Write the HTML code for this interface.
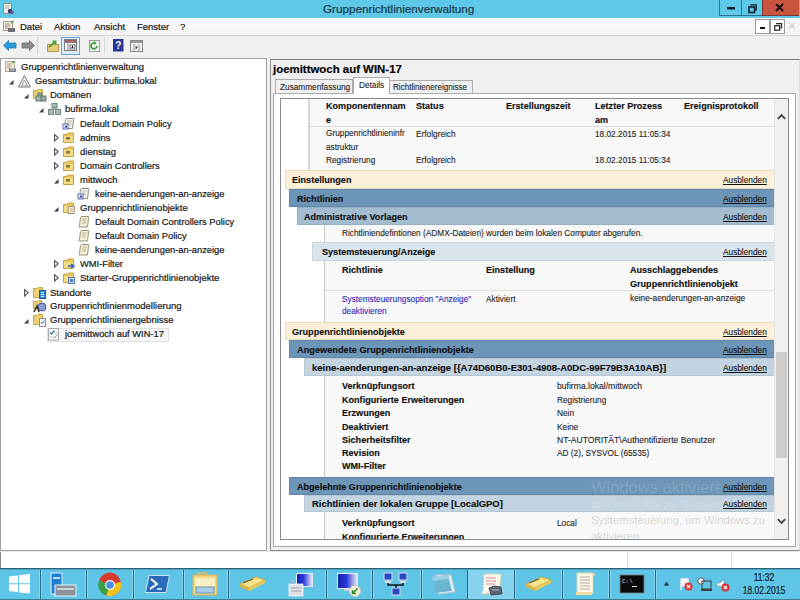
<!DOCTYPE html>
<html><head><meta charset="utf-8"><style>
html,body{margin:0;padding:0}
body{width:800px;height:600px;overflow:hidden;position:relative;font-family:"Liberation Sans",sans-serif;background:#f0f0f0;color:#000}
.a{position:absolute}
.t{position:absolute;white-space:nowrap;font-size:9.5px;line-height:12px;color:#161616;-webkit-text-stroke:0.2px #161616}
.r{position:absolute;white-space:nowrap;font-size:9px;line-height:12px;color:#222;transform:scaleX(0.92);transform-origin:0 0;-webkit-text-stroke:0.1px #222}
.rb{position:absolute;white-space:nowrap;font-size:9.3px;line-height:12px;color:#111;font-weight:bold;transform:scaleX(0.975);transform-origin:0 0;-webkit-text-stroke:0.15px #111}
.lnk{position:absolute;white-space:nowrap;font-size:9px;line-height:12px;color:#111;text-decoration:underline;transform:scaleX(0.92);transform-origin:0 0;-webkit-text-stroke:0.1px #111}
svg{position:absolute;overflow:visible}
</style></head><body>
<div class="a" style="left:0px;top:0px;width:800px;height:18px;background:#5ec8e8"></div>
<div class="t" style="left:323px;top:2px;font-size:11.7px;line-height:14px;color:#1c4658">Gruppenrichtlinienverwaltung</div>
<div class="a" style="left:719px;top:0px;width:22px;height:15px;background:#5ec8e8;border-bottom:1px solid #2f6f86;border-left:1px solid #2f6f86"></div>
<div class="a" style="left:741px;top:0px;width:21px;height:15px;background:#5ec8e8;border-bottom:1px solid #2f6f86;border-left:1px solid #2f6f86"></div>
<div class="a" style="left:762px;top:0px;width:36px;height:15px;background:#c9553f;border-bottom:1px solid #7a3a30;border-left:1px solid #7a3a30"></div>
<div class="a" style="left:0px;top:18px;width:800px;height:17px;background:linear-gradient(#fbfbfb,#f3f3f3);border-bottom:1px solid #d5d5d5"></div>
<div class="t" style="left:20px;top:21px;">Datei</div>
<div class="t" style="left:54px;top:21px;">Aktion</div>
<div class="t" style="left:94px;top:21px;">Ansicht</div>
<div class="t" style="left:137px;top:21px;">Fenster</div>
<div class="t" style="left:180px;top:21px;">?</div>
<div class="a" style="left:755px;top:19px;width:13px;height:13px;background:#fff;border:1px solid #9a9a9a"></div>
<div class="a" style="left:770px;top:19px;width:13px;height:13px;background:#fff;border:1px solid #9a9a9a"></div>
<div class="a" style="left:0px;top:36px;width:800px;height:22px;background:#f0f0f0"></div>
<div class="a" style="left:0px;top:58px;width:267px;height:493px;background:#fff;border:1px solid #a0a0a0;box-sizing:border-box"></div>
<div class="a" style="left:47px;top:328px;width:122px;height:14px;background:#f6f6f6;border:1px solid #e0e0e0;box-sizing:border-box"></div>
<div class="t" style="left:21px;top:61px;">Gruppenrichtlinienverwaltung</div>
<div class="t" style="left:35px;top:75px;transform:scaleX(0.98);transform-origin:0 0">Gesamtstruktur: bufirma.lokal</div>
<div class="t" style="left:50px;top:89px;">Domänen</div>
<div class="t" style="left:65px;top:103px;">bufirma.lokal</div>
<div class="t" style="left:80px;top:117.6px;transform:scaleX(0.98);transform-origin:0 0">Default Domain Policy</div>
<div class="t" style="left:80px;top:131.6px;">admins</div>
<div class="t" style="left:80px;top:145.6px;">dienstag</div>
<div class="t" style="left:80px;top:159.6px;transform:scaleX(0.98);transform-origin:0 0">Domain Controllers</div>
<div class="t" style="left:80px;top:173.6px;">mittwoch</div>
<div class="t" style="left:95px;top:187.6px;transform:scaleX(0.98);transform-origin:0 0">keine-aenderungen-an-anzeige</div>
<div class="t" style="left:80px;top:201.6px;">Gruppenrichtlinienobjekte</div>
<div class="t" style="left:95px;top:215.6px;transform:scaleX(0.98);transform-origin:0 0">Default Domain Controllers Policy</div>
<div class="t" style="left:95px;top:229.6px;transform:scaleX(0.98);transform-origin:0 0">Default Domain Policy</div>
<div class="t" style="left:95px;top:243.6px;transform:scaleX(0.98);transform-origin:0 0">keine-aenderungen-an-anzeige</div>
<div class="t" style="left:80px;top:257.6px;transform:scaleX(0.98);transform-origin:0 0">WMI-Filter</div>
<div class="t" style="left:80px;top:271.6px;">Starter-Gruppenrichtlinienobjekte</div>
<div class="t" style="left:50px;top:286.6px;">Standorte</div>
<div class="t" style="left:50px;top:300px;">Gruppenrichtlinienmodellierung</div>
<div class="t" style="left:50px;top:314px;">Gruppenrichtlinienergebnisse</div>
<div class="t" style="left:65px;top:328px;transform:scaleX(0.98);transform-origin:0 0">joemittwoch auf WIN-17</div>
<div class="a" style="left:270px;top:59px;width:530px;height:492px;border:1px solid #8c8c8c;border-top-color:#7a7a7a;border-right-color:#dedede;box-sizing:border-box;background:#f0f0f0"></div>
<div class="t" style="left:273px;top:62px;font-size:10.8px;line-height:14px;font-weight:bold;color:#000;transform:scaleX(1.058);transform-origin:0 0">joemittwoch auf WIN-17</div>
<div class="a" style="left:273px;top:93px;width:523px;height:454px;border:1px solid #a8a8a8;box-sizing:border-box;background:#fff"></div>
<div class="a" style="left:280px;top:98px;width:509px;height:442px;border:1px solid #8a8a8a;box-sizing:border-box;background:#fff"></div>
<div class="a" style="left:281px;top:99px;width:493px;height:440px;overflow:hidden">
<div class="a" style="left:27px;top:0px;width:466px;height:71px;background:#f8f8f8;border-left:2px solid #d6d6d6"></div>
<div class="a" style="left:28px;top:27px;width:465px;height:1px;background:#dcdcdc"></div>
<div class="rb" style="left:45px;top:1px;">Komponentennam</div>
<div class="rb" style="left:45px;top:15px;">e</div>
<div class="rb" style="left:135px;top:1px;">Status</div>
<div class="rb" style="left:225px;top:1px;">Erstellungszeit</div>
<div class="rb" style="left:314px;top:1px;">Letzter Prozess</div>
<div class="rb" style="left:314px;top:15px;">am</div>
<div class="rb" style="left:403px;top:1px;">Ereignisprotokoll</div>
<div class="r" style="left:45px;top:28px;">Gruppenrichtlinieninfr</div>
<div class="r" style="left:45px;top:42px;">astruktur</div>
<div class="r" style="left:135px;top:29px;">Erfolgreich</div>
<div class="r" style="left:314px;top:29px;">18.02.2015 11:05:34</div>
<div class="r" style="left:45px;top:55px;">Registrierung</div>
<div class="r" style="left:135px;top:55px;">Erfolgreich</div>
<div class="r" style="left:314px;top:55px;">18.02.2015 11:05:34</div>
<div class="a" style="left:43px;top:125px;width:450px;height:98px;background:#f8f8f8;border-left:1px solid #c8c8c8"></div>
<div class="a" style="left:43px;top:277px;width:450px;height:101px;background:#f8f8f8;border-left:1px solid #c8c8c8"></div>
<div class="a" style="left:43px;top:413px;width:450px;height:30px;background:#f8f8f8;border-left:1px solid #c8c8c8"></div>
<div class="a" style="left:44px;top:191px;width:449px;height:1px;background:#dedede"></div>
<div class="a" style="left:4px;top:71px;width:489px;height:19px;background:#fdf0d9;border:1px solid #ecdcc0;border-right:none;box-sizing:border-box"></div>
<div class="rb" style="left:11px;top:75px;color:#111;transform:scaleX(0.975)">Einstellungen</div>
<div class="lnk" style="left:442px;top:75px;">Ausblenden</div>
<div class="a" style="left:8px;top:90px;width:485px;height:18px;background:#6c95b8;border:1px solid #5f88ab;border-right:none;box-sizing:border-box"></div>
<div class="rb" style="left:16px;top:94px;color:#111;transform:scaleX(0.975)">Richtlinien</div>
<div class="lnk" style="left:442px;top:94px;">Ausblenden</div>
<div class="a" style="left:16px;top:108px;width:477px;height:18px;background:#a3bcd0;border:1px solid #96b0c6;border-right:none;box-sizing:border-box"></div>
<div class="rb" style="left:23px;top:112px;color:#111;transform:scaleX(0.975)">Administrative Vorlagen</div>
<div class="lnk" style="left:442px;top:112px;">Ausblenden</div>
<div class="r" style="left:61px;top:128px;">Richtliniendefintionen (ADMX-Dateien) wurden beim lokalen Computer abgerufen.</div>
<div class="a" style="left:31px;top:143px;width:462px;height:19px;background:#d9e4eb;border:1px solid #cbd6de;border-right:none;box-sizing:border-box"></div>
<div class="rb" style="left:41px;top:147px;color:#111;transform:scaleX(0.975)">Systemsteuerung/Anzeige</div>
<div class="lnk" style="left:442px;top:147px;">Ausblenden</div>
<div class="rb" style="left:61px;top:165px;">Richtlinie</div>
<div class="rb" style="left:205px;top:165px;">Einstellung</div>
<div class="rb" style="left:349px;top:165px;">Ausschlaggebendes</div>
<div class="rb" style="left:349px;top:179px;">Gruppenrichtlinienobjekt</div>
<div class="r" style="left:61px;top:194px;color:#2b2bd8">Systemsteuerungsoption "Anzeige"</div>
<div class="r" style="left:61px;top:206px;color:#2b2bd8">deaktivieren</div>
<div class="r" style="left:205px;top:194px;">Aktiviert</div>
<div class="r" style="left:349px;top:193px;">keine-aenderungen-an-anzeige</div>
<div class="a" style="left:4px;top:223px;width:489px;height:18px;background:#fdf0d9;border:1px solid #ecdcc0;border-right:none;box-sizing:border-box"></div>
<div class="rb" style="left:11px;top:227px;color:#111;transform:scaleX(0.975)">Gruppenrichtlinienobjekte</div>
<div class="lnk" style="left:442px;top:227px;">Ausblenden</div>
<div class="a" style="left:8px;top:241px;width:485px;height:18px;background:#6c95b8;border:1px solid #5f88ab;border-right:none;box-sizing:border-box"></div>
<div class="rb" style="left:15.5px;top:245px;color:#111;transform:scaleX(0.99)">Angewendete Gruppenrichtlinienobjekte</div>
<div class="lnk" style="left:442px;top:245px;">Ausblenden</div>
<div class="a" style="left:23px;top:259px;width:470px;height:18px;background:#c3d3e0;border:1px solid #b5c6d4;border-right:none;box-sizing:border-box"></div>
<div class="rb" style="left:30.5px;top:263px;color:#111;transform:scaleX(1.02)">keine-aenderungen-an-anzeige [{A74D60B0-E301-4908-A0DC-99F79B3A10AB}]</div>
<div class="lnk" style="left:442px;top:263px;">Ausblenden</div>
<div class="rb" style="left:61px;top:281px;">Verknüpfungsort</div>
<div class="r" style="left:276px;top:281px;transform:scaleX(0.955)">bufirma.lokal/mittwoch</div>
<div class="rb" style="left:61px;top:295px;">Konfigurierte Erweiterungen</div>
<div class="r" style="left:276px;top:295px;">Registrierung</div>
<div class="rb" style="left:61px;top:308px;">Erzwungen</div>
<div class="r" style="left:276px;top:308px;">Nein</div>
<div class="rb" style="left:61px;top:322px;">Deaktiviert</div>
<div class="r" style="left:276px;top:322px;">Keine</div>
<div class="rb" style="left:61px;top:335px;">Sicherheitsfilter</div>
<div class="r" style="left:276px;top:335px;transform:scaleX(0.953)">NT-AUTORITÄT\Authentifizierte Benutzer</div>
<div class="rb" style="left:61px;top:348px;">Revision</div>
<div class="r" style="left:276px;top:348px;">AD (2), SYSVOL (65535)</div>
<div class="rb" style="left:61px;top:361px;">WMI-Filter</div>
<div class="r" style="left:276px;top:361px;"></div>
<div class="a" style="left:8px;top:378px;width:485px;height:18px;background:#6c95b8;border:1px solid #5f88ab;border-right:none;box-sizing:border-box"></div>
<div class="rb" style="left:16px;top:382px;color:#111;transform:scaleX(0.975)">Abgelehnte Gruppenrichtlinienobjekte</div>
<div class="lnk" style="left:442px;top:382px;">Ausblenden</div>
<div class="a" style="left:23px;top:396px;width:470px;height:17px;background:#c3d3e0;border:1px solid #b5c6d4;border-right:none;box-sizing:border-box"></div>
<div class="rb" style="left:30.5px;top:399px;color:#111;transform:scaleX(1.012)">Richtlinien der lokalen Gruppe [LocalGPO]</div>
<div class="lnk" style="left:442px;top:399px;">Ausblenden</div>
<div class="rb" style="left:61px;top:418px;">Verknüpfungsort</div>
<div class="r" style="left:276px;top:418px;">Local</div>
<div class="rb" style="left:61px;top:432px;">Konfigurierte Erweiterungen</div>
</div>
<div class="a" style="left:774px;top:99px;width:14px;height:440px;background:#f0f0f0;border-left:1px solid #e4e4e4;box-sizing:border-box"></div>
<div class="a" style="left:776px;top:352px;width:11px;height:106px;background:#cdcdcd"></div>
<svg style="left:4px;top:61px" width="13" height="12" viewBox="0 0 13 12"><rect x="1.5" y="0.5" width="9" height="10" fill="#f2eedc" stroke="#b0ac94"/><path d="M3 3h5M3 5h5M3 7h3" stroke="#a09c84"/><rect x="5" y="7.5" width="7" height="3.5" fill="#7a7e8a"/><path d="M6.5 9h4" stroke="#c8ccd8"/><path d="M8 2 l3 -2" stroke="#5a9a50" stroke-width="1.3"/></svg>
<svg style="left:9px;top:80px" width="5" height="5" viewBox="0 0 5 5"><path d="M4.5 0 L4.5 4.5 L0 4.5 Z" fill="#404040"/></svg>
<svg style="left:18px;top:75px" width="13" height="13" viewBox="0 0 13 13"><path d="M6.5 0.5 L12.5 12 L0.5 12 Z" fill="#f4f4f4" stroke="#7c7c7c"/><path d="M6.5 5 L9.5 11 L3.5 11 Z" fill="none" stroke="#9a9a9a"/></svg>
<svg style="left:24px;top:94px" width="5" height="5" viewBox="0 0 5 5"><path d="M4.5 0 L4.5 4.5 L0 4.5 Z" fill="#404040"/></svg>
<svg style="left:33px;top:89px" width="14" height="12" viewBox="0 0 14 12"><path d="M0.5 1.5 L4 1.5 L5 0.5 L9.5 0.5 L9.5 9.5 L0.5 9.5 Z" fill="#ecd174" stroke="#c9a840"/><rect x="5" y="4" width="4" height="4" fill="#8fa8a0" stroke="#607a72"/><rect x="8" y="7" width="5" height="5" fill="#8fa8a0" stroke="#607a72"/><rect x="3" y="7" width="5" height="5" fill="#a0b6ae" stroke="#607a72"/></svg>
<svg style="left:39px;top:108px" width="5" height="5" viewBox="0 0 5 5"><path d="M4.5 0 L4.5 4.5 L0 4.5 Z" fill="#404040"/></svg>
<svg style="left:48px;top:103px" width="13" height="12" viewBox="0 0 13 12"><rect x="4" y="0.5" width="5" height="4" fill="#a5bbb3" stroke="#6f8a82"/><rect x="0.5" y="6.5" width="5" height="5" fill="#a5bbb3" stroke="#6f8a82"/><rect x="7.5" y="6.5" width="5" height="5" fill="#a5bbb3" stroke="#6f8a82"/><path d="M6.5 4.5 V6 M3 6 H10" stroke="#6f8a82"/></svg>
<svg style="left:63px;top:117.8px" width="12" height="12" viewBox="0 0 12 12"><path d="M2.5 1.5 Q3 0.5 4 0.5 L10.5 0.5 Q11.5 1 10.5 2 L9.5 10.5 L1.5 10.5 Z" fill="#fbfbf4" stroke="#8a8a80"/><path d="M4 3h5M4 5h4M4 7h4" stroke="#b8b8a8"/><rect x="0" y="6" width="5" height="5" fill="#f4f6ff" stroke="#5a6ab0"/><path d="M1.5 10 L3.5 8 M2 8h1.5v1.5" stroke="#1f3fa8" stroke-width="1"/></svg>
<svg style="left:54px;top:134.3px" width="6" height="9" viewBox="0 0 6 9"><path d="M0.6 0.6 L4.2 3.8 L0.6 7 Z" fill="none" stroke="#505050" stroke-width="1.1"/></svg>
<svg style="left:63px;top:131.8px" width="12" height="12" viewBox="0 0 12 12"><path d="M0.5 2.5 L4 2.5 L5 1 L10.5 1 L10.5 10.5 L0.5 10.5 Z" fill="#e9c75e" stroke="#c9a440" stroke-width="1"/><rect x="1" y="4" width="9" height="6" fill="#f3dc86"/><rect x="3" y="5" width="4" height="2.5" fill="#6b5a2a" opacity="0.8"/></svg>
<svg style="left:54px;top:148.3px" width="6" height="9" viewBox="0 0 6 9"><path d="M0.6 0.6 L4.2 3.8 L0.6 7 Z" fill="none" stroke="#505050" stroke-width="1.1"/></svg>
<svg style="left:63px;top:145.8px" width="12" height="12" viewBox="0 0 12 12"><path d="M0.5 2.5 L4 2.5 L5 1 L10.5 1 L10.5 10.5 L0.5 10.5 Z" fill="#e9c75e" stroke="#c9a440" stroke-width="1"/><rect x="1" y="4" width="9" height="6" fill="#f3dc86"/><rect x="3" y="5" width="4" height="2.5" fill="#6b5a2a" opacity="0.8"/></svg>
<svg style="left:54px;top:162.3px" width="6" height="9" viewBox="0 0 6 9"><path d="M0.6 0.6 L4.2 3.8 L0.6 7 Z" fill="none" stroke="#505050" stroke-width="1.1"/></svg>
<svg style="left:63px;top:159.8px" width="12" height="12" viewBox="0 0 12 12"><path d="M0.5 2.5 L4 2.5 L5 1 L10.5 1 L10.5 10.5 L0.5 10.5 Z" fill="#e9c75e" stroke="#c9a440" stroke-width="1"/><rect x="1" y="4" width="9" height="6" fill="#f3dc86"/><rect x="3" y="5" width="4" height="2.5" fill="#6b5a2a" opacity="0.8"/></svg>
<svg style="left:54px;top:178.8px" width="5" height="5" viewBox="0 0 5 5"><path d="M4.5 0 L4.5 4.5 L0 4.5 Z" fill="#404040"/></svg>
<svg style="left:63px;top:173.8px" width="12" height="12" viewBox="0 0 12 12"><path d="M0.5 2.5 L4 2.5 L5 1 L10.5 1 L10.5 10.5 L0.5 10.5 Z" fill="#e9c75e" stroke="#c9a440" stroke-width="1"/><rect x="1" y="4" width="9" height="6" fill="#f3dc86"/><rect x="3" y="5" width="4" height="2.5" fill="#6b5a2a" opacity="0.8"/></svg>
<svg style="left:78px;top:187.8px" width="12" height="12" viewBox="0 0 12 12"><path d="M2.5 1.5 Q3 0.5 4 0.5 L10.5 0.5 Q11.5 1 10.5 2 L9.5 10.5 L1.5 10.5 Z" fill="#fbfbf4" stroke="#8a8a80"/><path d="M4 3h5M4 5h4M4 7h4" stroke="#b8b8a8"/><rect x="0" y="6" width="5" height="5" fill="#f4f6ff" stroke="#5a6ab0"/><path d="M1.5 10 L3.5 8 M2 8h1.5v1.5" stroke="#1f3fa8" stroke-width="1"/></svg>
<svg style="left:54px;top:206.8px" width="5" height="5" viewBox="0 0 5 5"><path d="M4.5 0 L4.5 4.5 L0 4.5 Z" fill="#404040"/></svg>
<svg style="left:63px;top:201.8px" width="13" height="12" viewBox="0 0 13 12"><path d="M0.5 2.5 L4 2.5 L5 1 L10.5 1 L10.5 10.5 L0.5 10.5 Z" fill="#e9c75e" stroke="#c9a440" stroke-width="1"/><rect x="1" y="4" width="9" height="6" fill="#f3dc86"/><path d="M5.5 4.5 L11.5 4.5 L11 11.5 L5 11.5 Z" fill="#f7f2dc" stroke="#9a9070"/><path d="M7 7h3M7 9h3" stroke="#b0a888"/></svg>
<svg style="left:78px;top:215.8px" width="12" height="12" viewBox="0 0 12 12"><path d="M2.5 1.5 Q3 0.5 4 0.5 L10.5 0.5 Q11.5 1 10.5 2 L9.5 11 L1 11 Q0.5 10 1.5 9.5 Z" fill="#f6f1da" stroke="#9a9478"/><path d="M4 3h5M4 5h4M4 7h4" stroke="#b8b090"/></svg>
<svg style="left:78px;top:229.8px" width="12" height="12" viewBox="0 0 12 12"><path d="M2.5 1.5 Q3 0.5 4 0.5 L10.5 0.5 Q11.5 1 10.5 2 L9.5 11 L1 11 Q0.5 10 1.5 9.5 Z" fill="#f6f1da" stroke="#9a9478"/><path d="M4 3h5M4 5h4M4 7h4" stroke="#b8b090"/></svg>
<svg style="left:78px;top:243.8px" width="12" height="12" viewBox="0 0 12 12"><path d="M2.5 1.5 Q3 0.5 4 0.5 L10.5 0.5 Q11.5 1 10.5 2 L9.5 11 L1 11 Q0.5 10 1.5 9.5 Z" fill="#f6f1da" stroke="#9a9478"/><path d="M4 3h5M4 5h4M4 7h4" stroke="#b8b090"/></svg>
<svg style="left:54px;top:260.3px" width="6" height="9" viewBox="0 0 6 9"><path d="M0.6 0.6 L4.2 3.8 L0.6 7 Z" fill="none" stroke="#505050" stroke-width="1.1"/></svg>
<svg style="left:63px;top:257.8px" width="13" height="12" viewBox="0 0 13 12"><path d="M0.5 2.5 L4 2.5 L5 1 L10.5 1 L10.5 10.5 L0.5 10.5 Z" fill="#e9c75e" stroke="#c9a440" stroke-width="1"/><rect x="1" y="4" width="9" height="6" fill="#f3dc86"/><path d="M5 8 H10 M8 6 L11 8 L8 10" stroke="#3a64b8" stroke-width="1.5" fill="none"/></svg>
<svg style="left:54px;top:274.3px" width="6" height="9" viewBox="0 0 6 9"><path d="M0.6 0.6 L4.2 3.8 L0.6 7 Z" fill="none" stroke="#505050" stroke-width="1.1"/></svg>
<svg style="left:63px;top:271.8px" width="13" height="12" viewBox="0 0 13 12"><path d="M0.5 2.5 L4 2.5 L5 1 L10.5 1 L10.5 10.5 L0.5 10.5 Z" fill="#e9c75e" stroke="#c9a440" stroke-width="1"/><rect x="1" y="4" width="9" height="6" fill="#f3dc86"/><rect x="5.5" y="5.5" width="6" height="6" fill="#d8e4f4" stroke="#5678a8"/><rect x="7" y="7" width="3" height="3" fill="#4a78c0"/></svg>
<svg style="left:24px;top:289.3px" width="6" height="9" viewBox="0 0 6 9"><path d="M0.6 0.6 L4.2 3.8 L0.6 7 Z" fill="none" stroke="#505050" stroke-width="1.1"/></svg>
<svg style="left:33px;top:286.8px" width="14" height="12" viewBox="0 0 14 12"><path d="M0.5 1.5 L4 1.5 L5 0.5 L9.5 0.5 L9.5 10.5 L0.5 10.5 Z" fill="#ecd174" stroke="#c9a840"/><rect x="6.5" y="3.5" width="6" height="8" fill="#2f8ad8" stroke="#1a5aa8"/><path d="M8 5.5h3M8 7.5h3M8 9.5h3" stroke="#e0f0ff"/></svg>
<svg style="left:33px;top:300px" width="14" height="13" viewBox="0 0 14 13"><path d="M0.5 1.5 L4 1.5 L5 0.5 L8.5 0.5 L8.5 8.5 L0.5 8.5 Z" fill="#ecd174" stroke="#c9a840"/><circle cx="9" cy="7" r="4" fill="#8a9ad8" stroke="#4a5aa0"/><path d="M1 12 L4 6 L6 12" stroke="#2a2a2a" stroke-width="1.5" fill="none"/></svg>
<svg style="left:24px;top:319px" width="5" height="5" viewBox="0 0 5 5"><path d="M4.5 0 L4.5 4.5 L0 4.5 Z" fill="#404040"/></svg>
<svg style="left:33px;top:314px" width="14" height="13" viewBox="0 0 14 13"><path d="M0.5 1.5 L4 1.5 L5 0.5 L9.5 0.5 L9.5 10.5 L0.5 10.5 Z" fill="#ecd174" stroke="#c9a840"/><rect x="6.5" y="4.5" width="6" height="8" fill="#f4f6fa" stroke="#8890a8"/><path d="M8 8 L9 9.5 L11.5 6.5" stroke="#3a6ab8" fill="none"/></svg>
<svg style="left:48px;top:328px" width="12" height="13" viewBox="0 0 12 13"><rect x="0.5" y="0.5" width="10" height="11.5" fill="#fbfbfb" stroke="#a8a8a8"/><path d="M2 4.5 L3.5 6 L6.5 2.5" stroke="#3a7a8a" fill="none" stroke-width="1.3"/><path d="M5 8.5 L6.5 10 L9 7" stroke="#6a9aa8" fill="none" stroke-width="1"/><path d="M7 5h2.5M2 9h2" stroke="#b0b0b0"/></svg>
<div class="a" style="left:275px;top:79px;width:78px;height:15px;background:#f0f0f0;border:1px solid #acacac;border-bottom:none;box-sizing:border-box"></div>
<div class="a" style="left:389px;top:80px;width:84px;height:14px;background:#f0f0f0;border:1px solid #acacac;border-bottom:none;box-sizing:border-box"></div>
<div class="a" style="left:273px;top:93px;width:523px;height:1px;background:#acacac"></div>
<div class="a" style="left:353px;top:77px;width:37px;height:17px;background:#fff;border:1px solid #acacac;border-bottom:none;box-sizing:border-box"></div>
<div class="r" style="left:280px;top:80.5px;font-size:8.7px;color:#222;transform:scaleX(0.95)">Zusammenfassung</div>
<div class="r" style="left:359px;top:78.5px;font-size:8.7px;color:#222;transform:scaleX(0.95)">Details</div>
<div class="r" style="left:393px;top:81px;font-size:8.7px;color:#222;transform:scaleX(0.93)">Richtlinienereignisse</div>
<svg style="left:3px;top:3px" width="11" height="12" viewBox="0 0 11 12"><rect x="0.5" y="0.5" width="8" height="10" fill="#f2f0e4" stroke="#8a8a8a"/><path d="M2 3h5M2 5h4" stroke="#aaa"/><circle cx="7" cy="8" r="2.2" fill="#3a3a6a"/><circle cx="9" cy="9.5" r="1.6" fill="#6a4a9a"/></svg>
<svg style="left:3px;top:21px" width="12" height="12" viewBox="0 0 12 12"><rect x="0.5" y="0.5" width="9" height="9" fill="#efeadb" stroke="#a8a48c"/><path d="M2 3h5M2 5h5M2 7h3" stroke="#9a9680"/><rect x="5" y="7" width="7" height="4" fill="#6a6e7a"/><path d="M8 2 l3 -2" stroke="#5a9a50" stroke-width="1.3"/></svg>
<svg style="left:727px;top:6px" width="10" height="4" viewBox="0 0 10 4"><rect x="0" y="1" width="8" height="2.5" fill="#10202a"/></svg>
<svg style="left:748px;top:4px" width="10" height="10" viewBox="0 0 10 10"><rect x="1" y="3" width="5.5" height="5.5" fill="none" stroke="#10202a" stroke-width="1.6"/><path d="M3 1.8 V0.8 H8.2 V6 H7.2" fill="none" stroke="#10202a" stroke-width="1.3"/></svg>
<svg style="left:775px;top:3px" width="10" height="9" viewBox="0 0 10 9"><path d="M1 1 L8 8 M8 1 L1 8" stroke="#1a1010" stroke-width="2"/></svg>
<svg style="left:760px;top:27px" width="6" height="3" viewBox="0 0 6 3"><rect x="0" y="0" width="5" height="2" fill="#111"/></svg>
<svg style="left:774px;top:23px" width="9" height="8" viewBox="0 0 9 8"><rect x="0.7" y="2.7" width="5" height="4.5" fill="none" stroke="#222" stroke-width="1.2"/><path d="M2.5 1.2 V0.6 H7.6 V4.6 H6.5" fill="none" stroke="#222" stroke-width="1.1"/></svg>
<svg style="left:788px;top:22px" width="9" height="9" viewBox="0 0 9 9"><path d="M1 1 L7 7 M7 1 L1 7" stroke="#b8b8b8" stroke-width="1"/></svg>
<svg style="left:3px;top:40px" width="14" height="11" viewBox="0 0 14 11"><path d="M0.5 5.5 L5.5 0.5 L5.5 3 L13 3 L13 8 L5.5 8 L5.5 10.5 Z" fill="#2f9bd9" stroke="#1d7ab8" stroke-width="0.8"/></svg>
<svg style="left:21px;top:40px" width="14" height="11" viewBox="0 0 14 11"><path d="M13.5 5.5 L8.5 0.5 L8.5 3 L1 3 L1 8 L8.5 8 L8.5 10.5 Z" fill="#8c8c8c" stroke="#707070" stroke-width="0.8"/></svg>
<div class="a" style="left:37px;top:37px;width:1px;height:18px;background:#d0d0d0"></div>
<svg style="left:47px;top:40px" width="12" height="12" viewBox="0 0 12 12"><path d="M0.5 4.5 L11.5 4.5 L11.5 11.5 L0.5 11.5 Z" fill="#e6cf7c" stroke="#b89c48"/><path d="M2 7 L8 2 M5.5 1.5 L8.5 1.5 L8.5 4.5" stroke="#4ea834" stroke-width="1.8" fill="none"/></svg>
<div class="a" style="left:61px;top:37px;width:19px;height:18px;background:#dcecf9;border:1px solid #6aa6dc;box-sizing:border-box"></div>
<svg style="left:64px;top:39px" width="13" height="12" viewBox="0 0 13 12"><rect x="0.5" y="0.5" width="12" height="11" fill="#f4f4f4" stroke="#808080"/><rect x="1" y="1" width="11" height="2" fill="#b05a5a"/><rect x="1" y="3" width="11" height="1" fill="#7a8a9a"/><path d="M4 4 V11" stroke="#909090"/><rect x="6" y="6" width="5" height="4" fill="#fff" stroke="#707070"/><path d="M8.5 6.5 V9 M7.5 8 L8.5 9 L9.5 8" stroke="#333"/></svg>
<svg style="left:89px;top:40px" width="12" height="12" viewBox="0 0 12 12"><rect x="0.5" y="0.5" width="10" height="11" fill="#fafafa" stroke="#9a9a9a"/><path d="M8 6 A3 3 0 1 1 6 3" stroke="#3aa03a" stroke-width="1.8" fill="none"/><path d="M5 1 L8 3 L5 5 Z" fill="#3aa03a"/></svg>
<div class="a" style="left:104px;top:37px;width:1px;height:18px;background:#d8d8d8"></div>
<svg style="left:113px;top:39px" width="11" height="13" viewBox="0 0 11 13"><rect x="0" y="0" width="10.5" height="12.5" fill="#28389a"/><text x="5.2" y="10" font-family="Liberation Sans" font-size="10" font-weight="bold" fill="#fff" text-anchor="middle">?</text></svg>
<svg style="left:130px;top:40px" width="13" height="12" viewBox="0 0 13 12"><rect x="0.5" y="0.5" width="12" height="11" fill="#f0f0f0" stroke="#8a8a8a"/><rect x="1" y="1" width="11" height="2" fill="#9a9a9a"/><path d="M4 4 V11 M9 4 V11" stroke="#9a9a9a"/><path d="M5.5 5.5 L8 7.5 L5.5 9.5 Z" fill="#555"/></svg>
<div class="a" style="left:0px;top:551px;width:800px;height:17px;background:#ffffff"></div>
<div class="a" style="left:0px;top:551px;width:1px;height:17px;background:#8a8a8a"></div>
<div class="a" style="left:0px;top:568px;width:800px;height:32px;background:#5ec5e7;border-top:1px solid #2c6376;border-bottom:1px solid #3a7f96;box-sizing:border-box"></div>
<div class="a" style="left:0px;top:569px;width:800px;height:1px;background:#4aa3c2"></div>
<div class="a" style="left:627px;top:552px;width:1px;height:16px;background:#d8d8d8"></div>
<div class="a" style="left:731px;top:552px;width:1px;height:16px;background:#d8d8d8"></div>
<div class="a" style="left:0px;top:551px;width:800px;height:1px;background:#e6e6e6"></div>
<div class="a" style="left:39px;top:570px;width:1px;height:29px;background:#86d6f0"></div>
<div class="a" style="left:40px;top:570px;width:1px;height:29px;background:#2a6a80"></div>
<div class="a" style="left:41px;top:570px;width:1px;height:29px;background:#86d6f0"></div>
<div class="a" style="left:85px;top:570px;width:1px;height:29px;background:#86d6f0"></div>
<div class="a" style="left:86px;top:570px;width:1px;height:29px;background:#2a6a80"></div>
<div class="a" style="left:87px;top:570px;width:1px;height:29px;background:#86d6f0"></div>
<div class="a" style="left:132px;top:570px;width:1px;height:29px;background:#86d6f0"></div>
<div class="a" style="left:133px;top:570px;width:1px;height:29px;background:#2a6a80"></div>
<div class="a" style="left:134px;top:570px;width:1px;height:29px;background:#86d6f0"></div>
<div class="a" style="left:182px;top:570px;width:1px;height:29px;background:#86d6f0"></div>
<div class="a" style="left:183px;top:570px;width:1px;height:29px;background:#2a6a80"></div>
<div class="a" style="left:184px;top:570px;width:1px;height:29px;background:#86d6f0"></div>
<div class="a" style="left:227px;top:570px;width:1px;height:29px;background:#86d6f0"></div>
<div class="a" style="left:228px;top:570px;width:1px;height:29px;background:#2a6a80"></div>
<div class="a" style="left:229px;top:570px;width:1px;height:29px;background:#86d6f0"></div>
<div class="a" style="left:325px;top:570px;width:1px;height:29px;background:#86d6f0"></div>
<div class="a" style="left:326px;top:570px;width:1px;height:29px;background:#2a6a80"></div>
<div class="a" style="left:327px;top:570px;width:1px;height:29px;background:#86d6f0"></div>
<div class="a" style="left:371px;top:570px;width:1px;height:29px;background:#86d6f0"></div>
<div class="a" style="left:372px;top:570px;width:1px;height:29px;background:#2a6a80"></div>
<div class="a" style="left:373px;top:570px;width:1px;height:29px;background:#86d6f0"></div>
<div class="a" style="left:420px;top:570px;width:1px;height:29px;background:#86d6f0"></div>
<div class="a" style="left:421px;top:570px;width:1px;height:29px;background:#2a6a80"></div>
<div class="a" style="left:422px;top:570px;width:1px;height:29px;background:#86d6f0"></div>
<div class="a" style="left:467px;top:570px;width:1px;height:29px;background:#86d6f0"></div>
<div class="a" style="left:468px;top:570px;width:1px;height:29px;background:#2a6a80"></div>
<div class="a" style="left:469px;top:570px;width:1px;height:29px;background:#86d6f0"></div>
<div class="a" style="left:513px;top:570px;width:1px;height:29px;background:#86d6f0"></div>
<div class="a" style="left:514px;top:570px;width:1px;height:29px;background:#2a6a80"></div>
<div class="a" style="left:515px;top:570px;width:1px;height:29px;background:#86d6f0"></div>
<div class="a" style="left:561px;top:570px;width:1px;height:29px;background:#86d6f0"></div>
<div class="a" style="left:562px;top:570px;width:1px;height:29px;background:#2a6a80"></div>
<div class="a" style="left:563px;top:570px;width:1px;height:29px;background:#86d6f0"></div>
<div class="a" style="left:608px;top:570px;width:1px;height:29px;background:#86d6f0"></div>
<div class="a" style="left:609px;top:570px;width:1px;height:29px;background:#2a6a80"></div>
<div class="a" style="left:610px;top:570px;width:1px;height:29px;background:#86d6f0"></div>
<div class="a" style="left:654px;top:570px;width:1px;height:29px;background:#86d6f0"></div>
<div class="a" style="left:655px;top:570px;width:1px;height:29px;background:#2a6a80"></div>
<div class="a" style="left:656px;top:570px;width:1px;height:29px;background:#86d6f0"></div>
<div class="a" style="left:467px;top:570px;width:48px;height:29px;background:#86d3ef;border-left:1px solid #2a6a80;border-right:1px solid #2a6a80;box-sizing:border-box"></div>
<svg style="left:9px;top:574px" width="22" height="20" viewBox="0 0 22 20"><path d="M0 2.6 L9 1.4 L9 9.3 L0 9.3 Z M10 1.2 L21 0 L21 9.3 L10 9.3 Z M0 10.3 L9 10.3 L9 18.2 L0 17 Z M10 10.3 L21 10.3 L21 19.6 L10 18.4 Z" fill="#fdfdfd"/></svg>
<svg style="left:50px;top:572px" width="27" height="25" viewBox="0 0 27 25"><rect x="1" y="1" width="11" height="21" fill="#1f7fd0" stroke="#e8f4fc" stroke-width="1"/><rect x="3" y="5" width="7" height="2" fill="#bfe0f8"/><rect x="5" y="13" width="21" height="11" fill="#8a929c" stroke="#e8f4fc"/><path d="M7 17 H24" stroke="#e0e8f0" stroke-width="1.5"/></svg>
<svg style="left:98px;top:573px" width="24" height="24" viewBox="0 0 24 24"><circle cx="12" cy="12" r="11" fill="#d93a2e"/><path d="M12 12 L22.5 8.5 A11 11 0 0 1 8 22.3 Z" fill="#f3c31e"/><path d="M12 12 L8 22.3 A11 11 0 0 1 1.3 7 Z" fill="#3aa048"/><path d="M12 12 L1.3 7 A11 11 0 0 1 22.5 8.5 Z" fill="#d93a2e"/><circle cx="12" cy="12" r="5" fill="#fff"/><circle cx="12" cy="12" r="3.8" fill="#4a8ee0"/></svg>
<svg style="left:145px;top:575px" width="25" height="18" viewBox="0 0 25 18"><path d="M4 0.5 L24.5 0.5 L21 17.5 L0.5 17.5 Z" fill="#2a6ab8" stroke="#cfe4f6" stroke-width="1"/><path d="M6 4 L12 9 L5 14" stroke="#fff" stroke-width="2" fill="none"/><path d="M12 14 H17" stroke="#fff" stroke-width="1.5"/></svg>
<svg style="left:192px;top:572px" width="26" height="24" viewBox="0 0 26 24"><rect x="1" y="3" width="24" height="20" fill="#f2d884" stroke="#d8b050"/><rect x="3" y="6" width="20" height="8" fill="#fbefc4"/><rect x="4" y="15" width="18" height="6" fill="#a8cce8" stroke="#6a9ac4"/><path d="M5 1 H14 L15 3" stroke="#e8c060" stroke-width="1.5" fill="none"/></svg>
<svg style="left:239px;top:575px" width="27" height="17" viewBox="0 0 27 17"><path d="M1 9 L17 2 L26 5 L10 13 Z" fill="#f7e488" stroke="#c9a838"/><path d="M1 9 L10 13 L10 16 L1 12 Z" fill="#d8b84a"/><path d="M10 13 L26 5 L26 8 L10 16 Z" fill="#e8cc5a"/><path d="M4 8 L14 4" stroke="#6a5a2a" stroke-width="1.2"/></svg>
<svg style="left:288px;top:572px" width="26" height="26" viewBox="0 0 26 26"><defs><linearGradient id="scr" x1="0" x2="1"><stop offset="0" stop-color="#1020a8"/><stop offset="0.45" stop-color="#2a3ad8"/><stop offset="1" stop-color="#f0f0fa"/></linearGradient></defs><rect x="8.5" y="1.5" width="16" height="13" fill="url(#scr)" stroke="#e8ecf4"/><rect x="1" y="12" width="14" height="12" fill="#dfe2e6" stroke="#f4f4f4" stroke-width="0.8"/><path d="M3 16 H13 M3 19 H13" stroke="#9aa0a8"/><rect x="3" y="8" width="3" height="4" fill="#b0b4ba"/></svg>
<svg style="left:336px;top:572px" width="26" height="26" viewBox="0 0 26 26"><rect x="1.5" y="1.5" width="20" height="15" fill="url(#scr)" stroke="#e8ecf4"/><rect x="8" y="17" width="7" height="2" fill="#d0d4dc"/><circle cx="19" cy="19" r="5.5" fill="#f4f2dc" stroke="#c8c8b0" stroke-width="0.8"/><path d="M16.5 21.5 L21.5 16.5 M16.5 18 V21.5 H20 M21.5 20" stroke="#2a8a2a" stroke-width="1.5" fill="none"/></svg>
<svg style="left:383px;top:572px" width="26" height="25" viewBox="0 0 26 25"><rect x="1" y="1" width="8" height="7" fill="#2a4ac8" stroke="#d8dce8"/><rect x="16" y="1" width="8" height="7" fill="#2a4ac8" stroke="#d8dce8"/><rect x="9" y="16" width="8" height="7" fill="#2a4ac8" stroke="#d8dce8"/><path d="M5 9 V13 H13 V16 M20 9 V13 H13" stroke="#1a1a1a" stroke-width="1.5" fill="none"/><rect x="2" y="9" width="6" height="2" fill="#ddd"/><rect x="17" y="9" width="6" height="2" fill="#ddd"/></svg>
<svg style="left:431px;top:574px" width="25" height="21" viewBox="0 0 25 21"><path d="M4 1 L20 1 L24 18 L7 20 Z" fill="#e8f2f6" stroke="#b8c8d0"/><path d="M1 3 L17 1 L21 17 L4 19 Z" fill="#6cb4d0"/><path d="M1 3 L17 1 L18 5 L2 7 Z" fill="#9ad0e4"/></svg>
<svg style="left:480px;top:573px" width="25" height="24" viewBox="0 0 25 24"><path d="M4 1 L20 1 Q22 1 21 3 L19 20 L2 21 Q1 19 3 18 Z" fill="#fbf8ec" stroke="#d8d0b0" stroke-width="0.8"/><path d="M6 5 H16 M6 8 H16 M6 11 H15" stroke="#d88a9a" stroke-width="1.2"/><path d="M9 15 L14 13 L21 14 L22 21 L11 22 Z" fill="#5a6470" stroke="#39424c" stroke-width="0.8"/><path d="M12 17 H19" stroke="#a8b4c8"/></svg>
<svg style="left:525px;top:575px" width="27" height="17" viewBox="0 0 27 17"><path d="M1 9 L17 2 L26 5 L10 13 Z" fill="#f7e488" stroke="#c9a838"/><path d="M1 9 L10 13 L10 16 L1 12 Z" fill="#d8b84a"/><path d="M10 13 L26 5 L26 8 L10 16 Z" fill="#e8cc5a"/><path d="M4 8 L14 4" stroke="#6a5a2a" stroke-width="1.2"/></svg>
<svg style="left:575px;top:572px" width="22" height="24" viewBox="0 0 22 24"><rect x="2" y="1" width="16" height="20" fill="#fdf8e6" stroke="#e0d4a8" stroke-width="0.8"/><path d="M18 1.5 Q21 1.5 20 4 L18 4" fill="#d8ccb0"/><rect x="1" y="20" width="16" height="3" fill="#f0dca0"/><path d="M5 5 H15 M5 8 H15 M5 11 H15 M5 14 H15 M5 17 H15" stroke="#a8a8a0" stroke-width="0.9"/></svg>
<svg style="left:620px;top:575px" width="24" height="18" viewBox="0 0 24 18"><rect x="0" y="0" width="24" height="18" fill="#0a0a0a" stroke="#808080" stroke-width="0.8"/><text x="2" y="8" font-family="Liberation Mono" font-size="6" fill="#e0e0e0">C:\</text><rect x="12" y="11" width="5" height="1" fill="#e0e0e0"/></svg>
<svg style="left:664px;top:582px" width="6" height="4" viewBox="0 0 6 4"><path d="M0 3.5 L2.5 0 L5 3.5 Z" fill="#0a1a2a"/></svg>
<svg style="left:680px;top:578px" width="13" height="13" viewBox="0 0 13 13"><path d="M1 1 L1 12 M1 1 L8 1 L8 8 L1 8" stroke="#f0f0f0" stroke-width="1.5" fill="#f4f4f4"/><circle cx="8.5" cy="8.5" r="4" fill="#d83030"/><path d="M6.8 6.8 L10.2 10.2 M10.2 6.8 L6.8 10.2" stroke="#fff" stroke-width="1.2"/></svg>
<svg style="left:697px;top:577px" width="15" height="15" viewBox="0 0 15 15"><circle cx="4" cy="4" r="3.2" fill="#f2f2f2" stroke="#404040" stroke-width="0.8"/><rect x="5" y="4" width="9" height="8" fill="none" stroke="#404040" stroke-width="1"/><rect x="4" y="12" width="11" height="2" fill="#404040"/></svg>
<svg style="left:716px;top:578px" width="14" height="14" viewBox="0 0 14 14"><path d="M1 5 L4 5 L8 1 L8 12 L4 8 L1 8 Z" fill="#f4f4f4" stroke="#909090" stroke-width="0.6"/><circle cx="9.5" cy="9.5" r="4" fill="#d83030"/><path d="M7.8 7.8 L11.2 11.2 M11.2 7.8 L7.8 11.2" stroke="#fff" stroke-width="1.2"/></svg>
<div class="t" style="left:714px;top:571px;width:100px;text-align:center;font-size:10.4px;line-height:13.3px;color:#10202e;transform:scaleX(0.82);transform-origin:50% 0">11:32<br>18.02.2015</div>
<div class="a" style="left:585px;top:477px;width:136px;height:18px;overflow:hidden"><div class="t" style="left:6px;top:0px;font-size:16.5px;line-height:20px;color:rgba(255,255,255,0.16);-webkit-text-stroke:0">Windows aktivieren</div></div>
<div class="a" style="left:585px;top:495px;width:136px;height:17px;overflow:hidden"><div class="t" style="left:6px;top:2px;font-size:11.3px;line-height:16px;color:rgba(255,255,255,0.22);-webkit-text-stroke:0">Wechseln Sie zu "System" in der</div></div>
<div class="a" style="left:585px;top:512px;width:189px;height:27px;overflow:hidden"><div class="t" style="left:6px;top:1px;font-size:11.3px;line-height:15.5px;color:rgba(120,120,120,0.3);-webkit-text-stroke:0">Systemsteuerung, um Windows zu<br>aktivieren</div></div>
<svg style="left:777px;top:113px" width="10" height="7" viewBox="0 0 10 7"><path d="M0.8 5.8 L4.5 2 L8.2 5.8" stroke="#444" stroke-width="1.8" fill="none"/></svg>
<svg style="left:777px;top:518px" width="10" height="7" viewBox="0 0 10 7"><path d="M0.8 1.2 L4.5 5 L8.2 1.2" stroke="#444" stroke-width="1.8" fill="none"/></svg>
</body></html>
